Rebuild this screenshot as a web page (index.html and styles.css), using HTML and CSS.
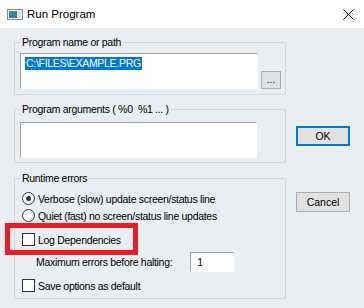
FILE: index.html
```html
<!DOCTYPE html>
<html lang="en">
<head>
    <meta charset="UTF-8">
    <title>Run Program</title>
    <link rel="stylesheet" href="styles.css">
</head>
<body>

<div class="window">
    <div class="titlebar">
        <svg class="app-icon" width="16" height="11" viewBox="0 0 16 11">
            <defs>
                <linearGradient id="pane" x1="0" y1="0" x2="0" y2="1">
                    <stop offset="0" stop-color="#3a9a78"/>
                    <stop offset="1" stop-color="#2f6fc0"/>
                </linearGradient>
            </defs>
            <rect x="0.5" y="0.5" width="15" height="10" fill="#f4f4f4" stroke="#8a8a8a"/>
            <rect x="2" y="2" width="8" height="7" fill="url(#pane)"/>
            <rect x="11" y="2" width="3" height="7" fill="#d8dde2"/>
        </svg>
        <span class="title">Run Program</span>
        <svg class="close" width="11" height="11" viewBox="0 0 11 11">
            <path d="M0.5 0.5 L10.5 10.5 M10.5 0.5 L0.5 10.5" stroke="#000" stroke-width="1"/>
        </svg>
    </div>

    <div class="content">
        <div class="main">
            <fieldset class="group group-path">
                <legend>Program name or path</legend>
                <div class="path-row">
                    <div class="field field-path"><span class="selected">C:\FILES\EXAMPLE.PRG</span></div>
                    <button class="browse">...</button>
                </div>
            </fieldset>

            <fieldset class="group group-args">
                <legend>Program arguments ( %0&nbsp; %1 ... )</legend>
                <div class="field field-args"></div>
            </fieldset>

            <fieldset class="group group-errors">
                <legend>Runtime errors</legend>
                <div class="option row-verbose">
                    <span class="radio checked"></span>
                    <span>Verbose (slow) update screen/status line</span>
                </div>
                <div class="option row-quiet">
                    <span class="radio"></span>
                    <span>Quiet (fast) no screen/status line updates</span>
                </div>
                <div class="option row-log">
                    <span class="checkbox"></span>
                    <span>Log Dependencies</span>
                </div>
                <div class="option row-max">
                    <span class="max-label">Maximum errors before halting:</span>
                    <div class="field field-max">1</div>
                </div>
                <div class="option row-save">
                    <span class="checkbox"></span>
                    <span>Save options as default</span>
                </div>
            </fieldset>
        </div>

        <div class="side">
            <button class="btn btn-ok">OK</button>
            <button class="btn btn-cancel">Cancel</button>
        </div>
    </div>

    <div class="highlight"></div>
</div>

</body>
</html>
```

FILE: styles.css
```css
html, body {
    margin: 0;
    padding: 0;
}
body {
    font-family: 'Liberation Sans', Arial, sans-serif;
    font-size: 10.5px;
    letter-spacing: -0.3px;
    color: #000;
    background-color: #e8eef2;
}
.window {
    position: relative;
    width: 364px;
    height: 308px;
    background-color: #e8eef2;
    overflow: hidden;
}
.titlebar {
    display: flex;
    align-items: center;
    height: 28px;
    background-color: #ffffff;
    padding: 0 10px 0 7px;
    box-sizing: border-box;
}
.app-icon {
    flex: none;
}
.title {
    margin-left: 4px;
    font-size: 11.5px;
    letter-spacing: 0;
    flex: 1;
}
.close {
    flex: none;
}
.content {
    display: flex;
    padding: 8px 0 0 14px;
}
.main {
    width: 272px;
}
.group {
    margin: 0;
    border: 1px solid #d3d8dc;
    min-width: 0;
}
.group legend {
    padding: 0 2px;
    line-height: 13px;
}
.group-path {
    padding: 4px 4px 5px 5px;
}
.group-path legend,
.group-args legend {
    margin-left: 0;
}
.group-args {
    margin-top: 8px;
    padding: 6px 4px 4px 5px;
}
.group-errors {
    margin-top: 9px;
    padding: 5px 4px 4px 7px;
}
.group-errors legend {
    margin-left: -2px;
}
.path-row {
    display: flex;
    align-items: flex-end;
    gap: 3px;
}
.field {
    background-color: #ffffff;
    border-top: 1px solid #a0a0a0;
    border-left: 1px solid #a0a0a0;
    border-right: 1px solid #ffffff;
    border-bottom: 1px solid #ffffff;
    box-sizing: border-box;
}
.field-path {
    width: 238px;
    height: 36px;
    padding: 3px 0 0 4px;
}
.selected {
    display: inline-block;
    line-height: 13px;
    background-color: #0078d7;
    color: #ffffff;
    padding: 0 1px;
}
.browse {
    width: 20px;
    height: 18px;
    padding: 0;
    margin: 0;
    background-color: #e1e1e1;
    border: 1px solid #adadad;
    font-family: inherit;
    font-size: 10px;
    line-height: 12px;
    color: #000;
}
.field-args {
    width: 237px;
    height: 36px;
}
.option {
    display: flex;
    align-items: center;
    gap: 3px;
    height: 17px;
    white-space: nowrap;
}
.row-log {
    margin-top: 7px;
}
.row-max {
    margin-top: 4px;
    height: 20px;
}
.row-save {
    margin-top: 5px;
}
.radio {
    width: 13px;
    height: 13px;
    border: 1px solid #333;
    border-radius: 50%;
    background-color: #ffffff;
    box-sizing: border-box;
    display: flex;
    align-items: center;
    justify-content: center;
    flex: none;
}
.radio.checked::after {
    content: "";
    width: 5px;
    height: 5px;
    border-radius: 50%;
    background-color: #333;
}
.checkbox {
    width: 13px;
    height: 13px;
    border: 1px solid #333;
    background-color: #ffffff;
    box-sizing: border-box;
    flex: none;
}
.max-label {
    margin-left: 14px;
}
.field-max {
    margin-left: 15px;
    width: 44px;
    height: 20px;
    padding-left: 6px;
    line-height: 18px;
}
.side {
    display: flex;
    flex-direction: column;
    margin-left: 10px;
}
.btn {
    width: 54px;
    height: 20px;
    padding: 0;
    background-color: #e1e1e1;
    border: 1px solid #adadad;
    font-family: inherit;
    font-size: 10.5px;
    color: #000;
}
.btn-ok {
    margin-top: 90px;
    border: 2px solid #0078d7;
}
.btn-cancel {
    margin-top: 46px;
}
.highlight {
    position: absolute;
    left: 5px;
    top: 223px;
    width: 133px;
    height: 32px;
    border: 5px solid #ed1c24;
    box-sizing: border-box;
}
```
